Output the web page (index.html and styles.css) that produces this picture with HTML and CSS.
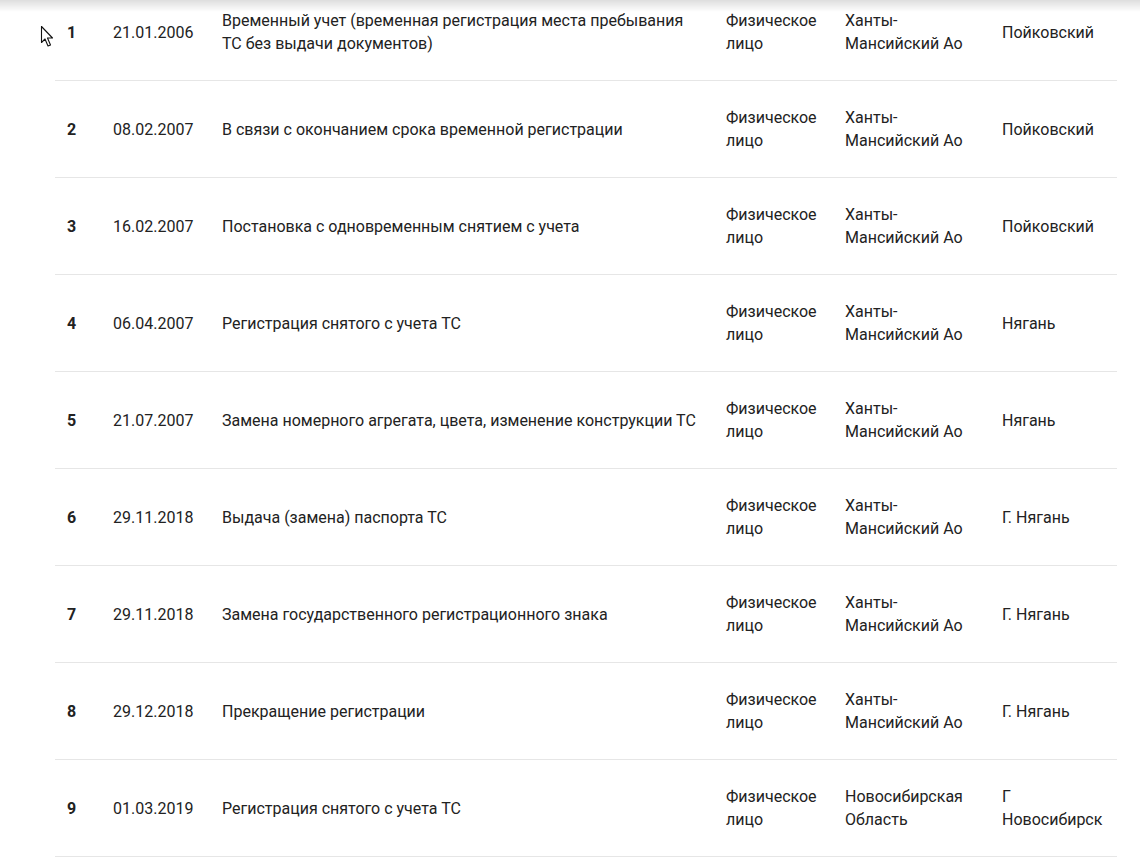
FILE: index.html
```html
<!DOCTYPE html>
<html lang="ru">
<head>
<meta charset="utf-8">
<title>История регистрации</title>
<link rel="stylesheet" href="styles.css">
</head>
<body>
<div class="top-shadow"></div>
<svg class="cursor" width="15" height="23" viewBox="0 0 15 23"><path d="M1.5 1.5 L1.5 17.5 L5 14 L8 21 L10.5 20 L7.5 13 L12.5 13 Z" fill="#fff" stroke="#111" stroke-width="1.1" stroke-linejoin="round"/></svg>
<div class="page">
  <div class="table">
    <div class="row"><div class="num">1</div><div class="date">21.01.2006</div><div class="event">Временный учет (временная регистрация места пребывания ТС без выдачи документов)</div><div class="owner">Физическое лицо</div><div class="region">Ханты-Мансийский Ао</div><div class="city">Пойковский</div></div>
    <div class="row"><div class="num">2</div><div class="date">08.02.2007</div><div class="event">В связи с окончанием срока временной регистрации</div><div class="owner">Физическое лицо</div><div class="region">Ханты-Мансийский Ао</div><div class="city">Пойковский</div></div>
    <div class="row"><div class="num">3</div><div class="date">16.02.2007</div><div class="event">Постановка с одновременным снятием с учета</div><div class="owner">Физическое лицо</div><div class="region">Ханты-Мансийский Ао</div><div class="city">Пойковский</div></div>
    <div class="row"><div class="num">4</div><div class="date">06.04.2007</div><div class="event">Регистрация снятого с учета ТС</div><div class="owner">Физическое лицо</div><div class="region">Ханты-Мансийский Ао</div><div class="city">Нягань</div></div>
    <div class="row"><div class="num">5</div><div class="date">21.07.2007</div><div class="event">Замена номерного агрегата, цвета, изменение конструкции ТС</div><div class="owner">Физическое лицо</div><div class="region">Ханты-Мансийский Ао</div><div class="city">Нягань</div></div>
    <div class="row"><div class="num">6</div><div class="date">29.11.2018</div><div class="event">Выдача (замена) паспорта ТС</div><div class="owner">Физическое лицо</div><div class="region">Ханты-Мансийский Ао</div><div class="city">Г. Нягань</div></div>
    <div class="row"><div class="num">7</div><div class="date">29.11.2018</div><div class="event">Замена государственного регистрационного знака</div><div class="owner">Физическое лицо</div><div class="region">Ханты-Мансийский Ао</div><div class="city">Г. Нягань</div></div>
    <div class="row"><div class="num">8</div><div class="date">29.12.2018</div><div class="event">Прекращение регистрации</div><div class="owner">Физическое лицо</div><div class="region">Ханты-Мансийский Ао</div><div class="city">Г. Нягань</div></div>
    <div class="row"><div class="num">9</div><div class="date">01.03.2019</div><div class="event">Регистрация снятого с учета ТС</div><div class="owner">Физическое лицо</div><div class="region">Новосибирская Область</div><div class="city">Г Новосибирск</div></div>
  </div>
</div>
</body>
</html>
```
FILE: styles.css
```css
html, body {
  margin: 0;
  padding: 0;
  background: #fff;
}
body {
  font-family: Roboto, "Noto Sans", sans-serif;
  font-size: 16px;
  line-height: 23px;
  color: #222;
  overflow: hidden;
}
.top-shadow {
  position: fixed;
  left: 0;
  top: 0;
  width: 100%;
  height: 12px;
  background: linear-gradient(to bottom, rgba(0,0,0,0.13), rgba(0,0,0,0));
  z-index: 5;
}
.cursor {
  position: fixed;
  left: 40px;
  top: 25px;
  z-index: 6;
}
.page {
  margin-top: -16px;
  padding-left: 55px;
  width: 1062px;
}
.row {
  display: grid;
  grid-template-columns: 46px 109px 504px 119px 157px 1fr;
  align-items: center;
  height: 96px;
  padding-left: 12px;
  border-bottom: 1px solid #e6e6e6;
}
.num {
  font-weight: 700;
}
.event {
  padding-right: 26px;
}
.owner {
  padding-right: 10px;
}
.region {
  padding-right: 24px;
}
.city {
  padding-right: 8px;
}
```
